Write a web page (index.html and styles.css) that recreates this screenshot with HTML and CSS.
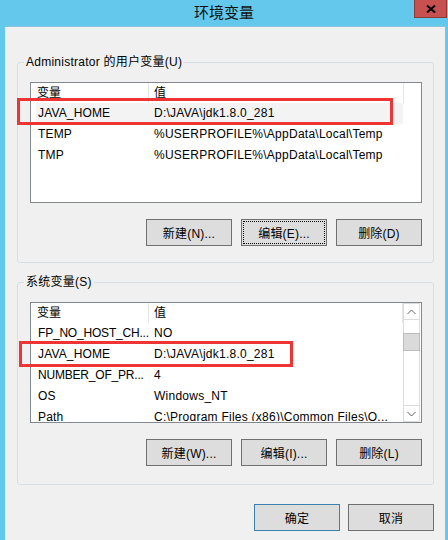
FILE: index.html
```html
<!DOCTYPE html>
<html lang="zh-CN">
<head>
<meta charset="utf-8">
<title>环境变量</title>
<link rel="stylesheet" href="styles.css">
</head>
<body>
<div class="window">
  <header class="titlebar">
    <span class="tb-spacer"></span>
    <span class="title">环境变量</span>
    <div class="close">
      <svg width="10" height="8" viewBox="0 0 10 8"><path d="M1 0.5 L9 7.5 M9 0.5 L1 7.5" stroke="#000" stroke-width="2" fill="none"/></svg>
    </div>
  </header>
  <main class="client">
    <fieldset class="group">
      <legend class="group-label">Administrator 的用户变量(U)</legend>
      <div class="list">
        <div class="list-main">
          <div class="list-head">
            <div class="head-cell">变量</div>
            <div class="head-cell">值</div>
            <div class="head-rest"></div>
          </div>
          <div class="list-body">
            <div class="row row-hover"><span class="cell-name">JAVA_HOME</span><span class="cell-value">D:\JAVA\jdk1.8.0_281</span><span class="mark mark-user"></span></div>
            <div class="row"><span class="cell-name">TEMP</span><span class="cell-value">%USERPROFILE%\AppData\Local\Temp</span></div>
            <div class="row"><span class="cell-name">TMP</span><span class="cell-value">%USERPROFILE%\AppData\Local\Temp</span></div>
          </div>
        </div>
      </div>
      <div class="btn-row">
        <button class="btn">新建(N)...</button>
        <button class="btn btn-focus">编辑(E)...</button>
        <button class="btn">删除(D)</button>
      </div>
    </fieldset>

    <fieldset class="group group-sys">
      <legend class="group-label">系统变量(S)</legend>
      <div class="list list-scroll">
        <div class="list-main">
          <div class="list-head">
            <div class="head-cell">变量</div>
            <div class="head-cell head-last">值</div>
          </div>
          <div class="list-body list-clip">
            <div class="row"><span class="cell-name cell-trunc">FP_NO_HOST_CH...</span><span class="cell-value">NO</span></div>
            <div class="row"><span class="cell-name">JAVA_HOME</span><span class="cell-value">D:\JAVA\jdk1.8.0_281</span><span class="mark mark-sys"></span></div>
            <div class="row"><span class="cell-name cell-trunc">NUMBER_OF_PR...</span><span class="cell-value">4</span></div>
            <div class="row"><span class="cell-name">OS</span><span class="cell-value">Windows_NT</span></div>
            <div class="row"><span class="cell-name">Path</span><span class="cell-value">C:\Program Files (x86)\Common Files\O...</span></div>
          </div>
        </div>
        <div class="scrollbar">
          <div class="sb-btn">
            <svg width="9" height="6" viewBox="0 0 9 6"><path d="M0.5 5 L4.5 1 L8.5 5" stroke="#606060" stroke-width="1" fill="none"/></svg>
          </div>
          <div class="sb-track"><div class="sb-thumb"></div></div>
          <div class="sb-btn">
            <svg width="9" height="6" viewBox="0 0 9 6"><path d="M0.5 1 L4.5 5 L8.5 1" stroke="#606060" stroke-width="1" fill="none"/></svg>
          </div>
        </div>
      </div>
      <div class="btn-row">
        <button class="btn">新建(W)...</button>
        <button class="btn">编辑(I)...</button>
        <button class="btn">删除(L)</button>
      </div>
    </fieldset>

    <div class="dialog-btns">
      <button class="btn btn-default">确定</button>
      <button class="btn">取消</button>
    </div>
  </main>
</div>
</body>
</html>
```
FILE: styles.css
```css
html, body {
  margin: 0;
  padding: 0;
}

body {
  width: 448px;
  height: 540px;
  overflow: hidden;
  background: #63c8eb;
  font-family: "Liberation Sans", "Noto Sans CJK SC", sans-serif;
  font-size: 12px;
  color: #000;
}

.window {
  display: flex;
  flex-direction: column;
  height: 540px;
}

.titlebar {
  height: 26px;
  display: grid;
  grid-template-columns: 1fr auto 1fr;
  align-items: start;
}

.title {
  font-family: "Noto Sans CJK SC", sans-serif;
  font-size: 15px;
  line-height: 24px;
  color: #111;
}

.close {
  justify-self: end;
  box-sizing: border-box;
  width: 33px;
  height: 18px;
  margin-right: 1px;
  background: #c75050;
  border: 1px solid #8a3934;
  border-top: 0;
  display: flex;
  align-items: center;
  justify-content: center;
}

.client {
  flex: 1;
  margin: 0 3px 0 5px;
  padding: 28px 11px 0 12px;
  background: #f0f0f0;
  border-top: 1px solid #8ec3dc;
}

.group {
  margin: 0;
  padding: 13px 11px 16px 12px;
  border: 1px solid #d5dfe5;
  border-radius: 3px;
}

.group-sys {
  margin-top: 12px;
  padding-bottom: 18px;
}

.group-label {
  margin-left: -6px;
  padding: 0 2px;
  line-height: 14px;
  letter-spacing: 0.25px;
}

.list {
  box-sizing: border-box;
  height: 121px;
  border: 1px solid #828790;
  background: #fff;
}

.list-scroll {
  display: grid;
  grid-template-columns: 1fr 17px;
  padding-right: 1px;
}

.list-head {
  display: grid;
  grid-template-columns: 118px 255px 1fr;
  height: 20px;
}

.list-scroll .list-head {
  grid-template-columns: 118px 1fr;
}

.head-cell {
  box-sizing: border-box;
  border-right: 1px solid #e5e5e5;
  padding-left: 6px;
  line-height: 20px;
}

.head-cell + .head-cell {
  padding-left: 5px;
}

.list-clip {
  height: 98px;
  overflow-x: visible;
  overflow-y: clip;
}

.row {
  position: relative;
  display: grid;
  grid-template-columns: 113px 1fr;
  height: 21px;
  line-height: 21px;
  margin-left: 5px;
  width: 367px;
  white-space: nowrap;
}

.row-hover {
  background: #f3f3f3;
}

.cell-name {
  padding-left: 2px;
  letter-spacing: 0.15px;
}

.cell-trunc {
  letter-spacing: -0.2px;
}

.cell-value {
  padding-left: 5px;
  letter-spacing: 0.25px;
}

.mark {
  position: absolute;
  box-sizing: border-box;
  border: 3px solid #ef3434;
}

.mark-user {
  left: -19px;
  top: -5px;
  width: 376px;
  height: 27px;
}

.mark-sys {
  left: -17px;
  top: -3px;
  width: 274px;
  height: 26px;
}

.scrollbar {
  display: flex;
  flex-direction: column;
  background: #fff;
}

.sb-btn {
  box-sizing: border-box;
  height: 17px;
  border: 1px solid #dcdcdc;
  display: flex;
  align-items: center;
  justify-content: center;
}

.sb-track {
  flex: 1;
  border-left: 1px solid #dcdcdc;
  border-right: 1px solid #dcdcdc;
}

.sb-thumb {
  box-sizing: border-box;
  margin: 13px -1px 0;
  height: 18px;
  background: #dadada;
  border: 1px solid #bcbcbc;
}

.btn-row {
  display: flex;
  justify-content: flex-end;
  gap: 9px;
  margin-top: 16px;
}

.dialog-btns {
  display: flex;
  justify-content: flex-end;
  gap: 8px;
  margin-top: 19px;
}

.btn {
  box-sizing: border-box;
  width: 86px;
  height: 27px;
  padding: 0;
  margin: 0;
  border: 1px solid #707070;
  border-radius: 0;
  background: #dddddd;
  font-family: "Liberation Sans", "Noto Sans CJK SC", sans-serif;
  font-size: 12px;
  letter-spacing: 0.2px;
  color: #000;
}

.btn-focus {
  outline: 1px dotted #000;
  outline-offset: -3px;
}

.btn-default {
  border-color: #3c7fb1;
}
```
